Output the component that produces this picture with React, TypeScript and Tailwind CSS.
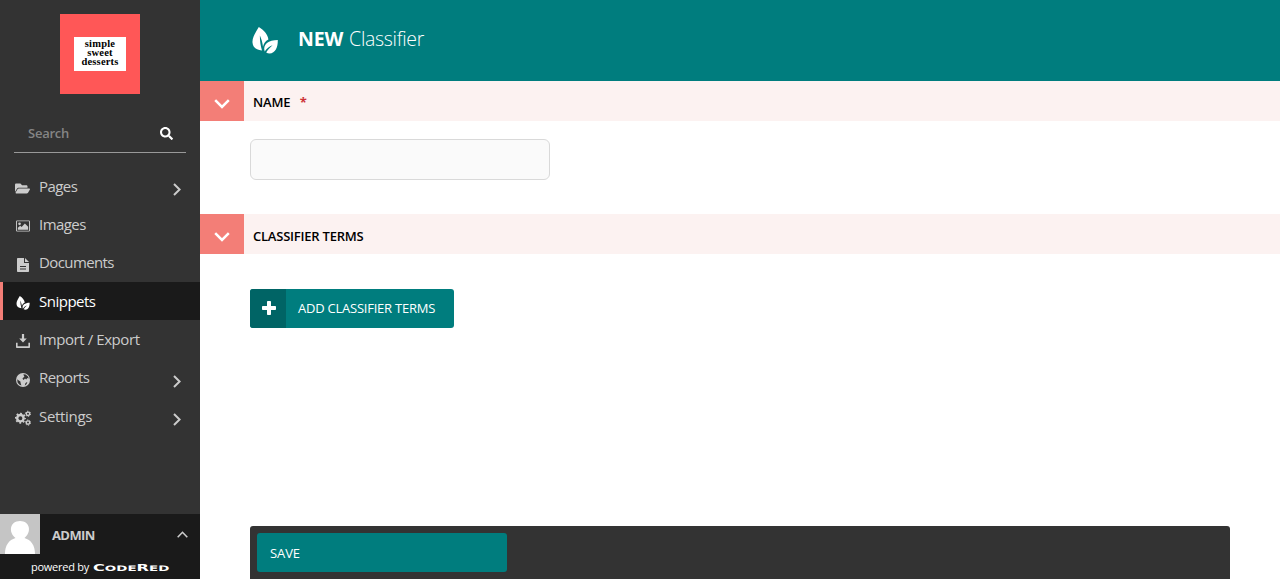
import React from 'react';
import { FaFolderOpen, FaSearch } from 'react-icons/fa';

const LeafIcon = ({ className }: { className?: string }) => (
  <svg viewBox="0 0 26 27" className={className} fill="currentColor">
    <path d="M6.8 0C11.8 3.2 16 7.6 16.4 12.6C13.4 14.2 11.6 16.6 11 19.8C10.4 15.5 9.3 11.6 7.9 8.6C7.8 13.4 8.5 18.4 10 23.4C4 23.2 0.9 20 0.5 15.4C0.1 10.4 3.8 5 6.8 0Z" />
    <path d="M25.8 13C26 20.4 23.2 26.4 17.6 26.4C16.3 26.4 15.2 26.2 14.2 25.6C15.8 22.6 17.9 20.4 20.6 18.2C17.2 19.5 14.5 21.6 12.7 24.4C10.4 17.4 16.6 13 25.8 13Z" />
  </svg>
);

const ImageIcon = () => (
  <svg viewBox="0 0 15 12" className="ml-px h-3 w-3.5" fill="currentColor">
    <path fillRule="evenodd" d="M1.2 0H13.8Q15 0 15 1.2V10.8Q15 12 13.8 12H1.2Q0 12 0 10.8V1.2Q0 0 1.2 0ZM1 1V11H14V1Z" />
    <circle cx="3.8" cy="3.7" r="1.4" />
    <path d="M2 10V8L4.5 5.6L6 7L9.5 3.2L13 6.8V10Z" />
  </svg>
);

const DocumentIcon = () => (
  <svg viewBox="0 0 12 14" className="ml-0.5 h-3.5 w-3" fill="currentColor">
    <path fillRule="evenodd" d="M0.8 0H7V5H12V13.2Q12 14 11.2 14H0.8Q0 14 0 13.2V0.8Q0 0 0.8 0ZM3 8V9H9V8ZM3 10.5V11.5H9V10.5Z" />
    <path d="M8 0L12 4H8Z" />
  </svg>
);

const DownloadIcon = () => (
  <svg viewBox="0 0 14 14" className="ml-px size-3.5" fill="currentColor">
    <path d="M5.9 0H8.1V4.6H10.8L7 8.6L3.2 4.6H5.9Z" />
    <path d="M0 8.8H1.6V12.2H12.4V8.8H14V13.2Q14 14 13.2 14H0.8Q0 14 0 13.2Z" />
  </svg>
);

const GlobeIcon = () => (
  <svg viewBox="0 0 14 14" className="ml-px size-3.5">
    <circle cx="7" cy="7" r="7" fill="#ccc" />
    <path d="M7.4 1.2L9.6 1.5L11.8 3.2L12.8 5.4L11.4 5L10.2 6.4L9 5.6L7.6 7L6.4 5.8L7.4 4.6L8.4 3.8L7.8 2.6ZM1.2 6.2L2.8 7.4L4.4 8.6L4.6 10L5.4 12.6L3.2 11.6L1.6 9.4ZM9.4 10.2L10.6 9.2L11.4 9.6L10.2 11.6L8.8 12.4Z" fill="#333" />
  </svg>
);

const GearsIcon = () => (
  <svg viewBox="0 0 16 16" className="h-4 w-4" fill="none" stroke="currentColor">
    <circle cx="5.4" cy="8.2" r="3.2" strokeWidth="2.4" />
    <circle cx="5.4" cy="8.2" r="4.7" strokeWidth="1.6" strokeDasharray="1.85 1.84" strokeDashoffset=".9" />
    <circle cx="13" cy="3.8" r="1.7" strokeWidth="1.4" />
    <circle cx="13" cy="3.8" r="2.6" strokeWidth="1" strokeDasharray="1.36 1.36" />
    <circle cx="13" cy="12.6" r="1.7" strokeWidth="1.4" />
    <circle cx="13" cy="12.6" r="2.6" strokeWidth="1" strokeDasharray="1.36 1.36" />
  </svg>
);

const Chevron = ({ className }: { className?: string }) => (
  <svg viewBox="0 0 8 13" className={className} fill="none" stroke="currentColor" strokeWidth="2">
    <path d="M1 1L6.6 6.5L1 12" />
  </svg>
);

const items = [
  { label: 'Pages', icon: <FaFolderOpen className="size-[15px]" />, more: true, text: 'tracking-[-0.55px]' },
  { label: 'Images', icon: <ImageIcon />, text: 'tracking-[-0.55px]' },
  { label: 'Documents', icon: <DocumentIcon />, text: 'tracking-[-0.6px]' },
  { label: 'Snippets', icon: <LeafIcon className="ml-px h-3.5 w-3.5" />, active: true, text: 'tracking-[-0.5px]' },
  { label: 'Import / Export', icon: <DownloadIcon />, text: 'tracking-[-0.42px]' },
  { label: 'Reports', icon: <GlobeIcon />, more: true, text: 'tracking-[-0.6px]' },
  { label: 'Settings', icon: <GearsIcon />, more: true, text: 'tracking-[-0.32px]' },
];

function Sidebar() {
  return (
    <aside className="flex w-[200px] shrink-0 flex-col bg-[#333]">
      <div className="mx-auto mt-3.5 flex size-20 items-center justify-center bg-[#ff5757]">
        <div className="flex h-[34px] w-[52px] flex-col items-center bg-white pt-0.5 font-['Liberation_Serif',serif] text-[10.5px] leading-[9px] font-bold tracking-[0.2px] text-black">
          <span>simple</span>
          <span>sweet</span>
          <span>desserts</span>
        </div>
      </div>
      <div className="mx-3.5 mt-[19px] flex h-10 items-center justify-between border-b border-[#999] pt-0.5 pr-[13px] pl-3.5">
        <span className="text-[13px] font-semibold tracking-[-0.25px] text-[#858585]">Search</span>
        <FaSearch className="size-[13px] text-white" />
      </div>
      <nav className="mt-3.5">
        {items.map((it) => (
          <div
            key={it.label}
            className={`flex h-[38.33px] items-center pr-[19px] text-[15px] ${it.active ? 'border-l-3 border-[#f37e77] bg-[#1a1a1a] pl-3 text-white' : 'pl-[15px] text-[#ccc]'}`}
          >
            <span className="flex w-6 shrink-0 items-center pt-1">{it.icon}</span>
            <span className={`-mt-[0.6px] flex-1 whitespace-nowrap ${it.text}`}>{it.label}</span>
            {it.more && <Chevron className="mt-[6.6px] h-[13px] w-2" />}
          </div>
        ))}
      </nav>
      <footer className="mt-auto h-[65px] bg-[#1a1a1a]">
        <div className="flex h-10 items-center pr-3">
          <svg viewBox="0 0 40 40" className="size-10">
            <rect width="40" height="40" fill="#c5c5c5" />
            <path d="M5 40C5 31 9 26 15.5 24C8 18 10 7 20 7C30 7 32 18 24.5 24C31 26 35 31 35 40Z" fill="#fff" />
          </svg>
          <span className="ml-3 flex-1 pt-[3px] text-[13px] font-bold tracking-[-0.6px] text-[#ccc]">ADMIN</span>
          <svg viewBox="0 0 11 7" className="h-[7px] w-[11px]" fill="none" stroke="#ccc" strokeWidth="1.6">
            <path d="M0.7 6.2L5.5 1.3L10.3 6.2" />
          </svg>
        </div>
        <div className="flex h-[25px] items-center pt-0.5 pl-[31px] text-white">
          <span className="w-[62px] text-[11px] whitespace-nowrap tracking-[-0.25px]">powered by</span>
          <span className="mt-px inline-block origin-left scale-x-[1.79] font-['DejaVu_Sans',sans-serif] text-[9px] leading-none font-bold whitespace-nowrap">
            C<span className="text-[7.5px]">ODE</span>R<span className="text-[7.5px]">ED</span>
          </span>
        </div>
      </footer>
    </aside>
  );
}

function SectionHeader({ title, required }: { title: string; required?: boolean }) {
  return (
    <div className="flex h-10 bg-[#fcf2f1] text-[13px] font-semibold text-black">
      <div className="flex w-11 items-center justify-center bg-[#f37e77] pt-1.5 text-white">
        <svg viewBox="0 0 16 10" className="h-2.5 w-4" fill="none" stroke="currentColor" strokeWidth="2.5">
          <path d="M1.2 1.2L8 8L14.8 1.2" />
        </svg>
      </div>
      <div className={`flex items-center pl-[9px] ${required ? 'pt-[3px] tracking-[-0.2px]' : 'pt-[5px] tracking-[-0.22px]'}`}>
        {title}
        {required && <span className="ml-[9.5px] font-bold text-[#cd3238]">*</span>}
      </div>
    </div>
  );
}

export default function App() {
  return (
    <div className="flex h-[579px] w-full overflow-hidden bg-white font-['Open_Sans','Noto_Sans',sans-serif]">
      <Sidebar />
      <main className="flex min-w-0 flex-1 flex-col">
        <header className="flex h-[81px] items-center bg-[#007d7e] pl-[52px] text-white">
          <LeafIcon className="h-[27px] w-[26px]" />
          <h1 className="mb-[3px] ml-5 text-[19.5px] font-light tracking-[-0.3px] whitespace-nowrap">
            <span className="font-bold tracking-[-0.1px]">NEW</span> <span className="ml-px">Classifier</span>
          </h1>
        </header>
        <SectionHeader title="NAME" required />
        <div className="h-[93px] pt-[18px] pl-[50px]">
          <input aria-label="Name" className="h-[41px] w-[300px] rounded-md border border-[#d9d9d9] bg-[#fafafa] px-4" />
        </div>
        <SectionHeader title="CLASSIFIER TERMS" />
        <div className="pt-[35px] pl-[50px]">
          <button className="flex h-[39px] w-[204px] items-center overflow-hidden rounded-[3px] bg-[#007d7e] text-[13px] text-white">
            <span className="flex h-full w-9 items-center justify-center bg-[#006465] pb-px pl-px">
              <svg viewBox="0 0 14 14" className="size-3.5" fill="currentColor">
                <path d="M5.8 0H8.2Q9 0 9 .8V5H13.2Q14 5 14 5.8V8.2Q14 9 13.2 9H9V13.2Q9 14 8.2 14H5.8Q5 14 5 13.2V9H.8Q0 9 0 8.2V5.8Q0 5 .8 5H5V.8Q5 0 5.8 0Z" />
              </svg>
            </span>
            <span className="ml-3 tracking-[-0.23px] whitespace-nowrap">ADD CLASSIFIER TERMS</span>
          </button>
        </div>
        <div className="mx-[50px] mt-auto h-[53px] rounded-t-[3px] bg-[#333] pt-[7px] pl-[7px]">
          <button className="flex h-[39px] w-[250px] items-center rounded-[3px] bg-[#007d7e] pt-0.5 pl-[13px] text-[13px] tracking-[-0.1px] text-white">
            SAVE
          </button>
        </div>
      </main>
    </div>
  );
}
